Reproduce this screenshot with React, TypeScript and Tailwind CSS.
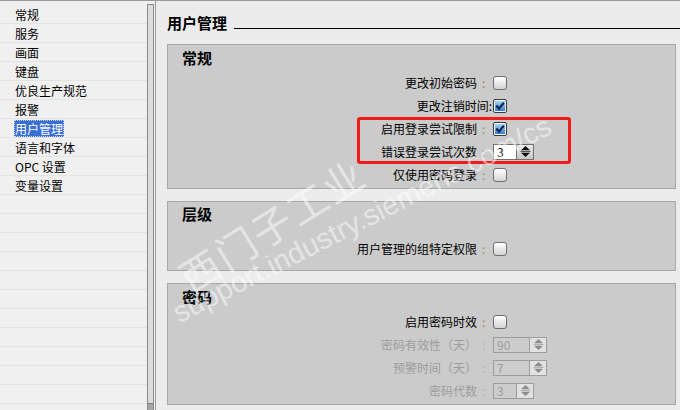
import React from "react";

const FONT = "font-['Noto_Sans_CJK_SC','Microsoft_YaHei',sans-serif]";

function Check({ checked }: { checked?: boolean }) {
  if (checked) {
    return (
      <div className="w-[14px] h-[14px] rounded-[2px] border border-[#3a3a3a] p-[1px] bg-[#f4f8fc]">
        <div className="w-full h-full bg-linear-to-b from-[#a9d4f6] to-[#2f7ccd] flex items-center justify-center">
          <svg width="10" height="10" viewBox="0 0 10 10">
            <path d="M1.3 4.6 L4 7.6 L8.8 1.8" stroke="#0b2350" strokeWidth="2.2" fill="none" />
          </svg>
        </div>
      </div>
    );
  }
  return <div className="w-[14px] h-[14px] rounded-[3px] border border-[#6e6e6e] bg-linear-to-b from-white to-[#d4d4d4]" />;
}

function Arrows({ disabled }: { disabled?: boolean }) {
  const c = disabled ? "#8c8c8c" : "#111";
  return (
    <svg width="11" height="13" viewBox="0 0 11 13">
      <path d="M5.5 1 L10 5.2 L1 5.2 Z" fill={c} />
      <path d="M5.5 12 L10 7.8 L1 7.8 Z" fill={c} />
      <line x1="0.5" y1="6.5" x2="10.5" y2="6.5" stroke={disabled ? "#b0b0b0" : "#555"} strokeWidth="1" />
    </svg>
  );
}

function Spin({ value, wide, disabled }: { value: string; wide?: boolean; disabled?: boolean }) {
  return (
    <div
      className={
        "flex h-[16px] border " +
        (disabled ? "border-[#9c9c9c] " : "border-[#6f6f6f] ") +
        (wide ? "w-[54px]" : "w-[41px]")
      }
    >
      <div
        className={
          "flex-1 flex items-center pl-[3px] text-[12px] leading-[14px] border-r " +
          (disabled ? "bg-[#cdcdcd] text-[#9c9c9c] border-[#9c9c9c]" : "bg-white text-[#111] border-[#6f6f6f]")
        }
      >
        {value}
      </div>
      <div
        className={
          "w-[16px] flex items-center justify-center " +
          (disabled ? "bg-[#e2e2e2]" : "bg-linear-to-b from-[#e8e8e8] to-[#c8c8c8]")
        }
      >
        <Arrows disabled={disabled} />
      </div>
    </div>
  );
}

function Row({
  label,
  control,
  disabled,
  inlineColon,
}: {
  label: string;
  control: React.ReactNode;
  disabled?: boolean;
  inlineColon?: boolean;
}) {
  return (
    <div className="flex items-center h-[23px]">
      {inlineColon ? (
        <div className="w-[325px] text-right text-[12px] leading-[23px] text-black pr-[1px]">{label}:</div>
      ) : (
        <>
          <div
            className={
              "w-[309px] text-right text-[12px] leading-[23px] " + (disabled ? "text-[#9d9d9d]" : "text-black")
            }
          >
            {label}
          </div>
          <div
            className={
              "w-[16px] pl-[5px] text-[12px] leading-[23px] " + (disabled ? "text-[#b0b0b0]" : "text-[#a08a66]")
            }
          >
            :
          </div>
        </>
      )}
      {control}
    </div>
  );
}

const navItems = ["常规", "服务", "画面", "键盘", "优良生产规范", "报警", "用户管理", "语言和字体", "OPC 设置", "变量设置"];

export default function App() {
  const rows = Array.from({ length: 21 }, (_, i) => navItems[i] ?? "");
  return (
    <div className={"relative w-[680px] h-[410px] overflow-hidden flex border-t border-[#9a9a9a] bg-[#f0f0f0] " + FONT}>
      {/* left list */}
      <div className="w-[147px] pt-[4px] flex flex-col bg-[#f0f0f0]">
        {rows.map((t, i) => (
          <div key={i} className="h-[19px] shrink-0 border-b border-[#e3e3e3] flex items-center pl-[14px]">
            {t === "用户管理" ? (
              <span className="border border-dotted border-[#c8d4f0] bg-[#3a6fd4] text-white text-[12px] leading-[15px]">
                {t}
              </span>
            ) : (
              <span className="pl-[1px] text-[12px] leading-[15px] text-black">{t}</span>
            )}
          </div>
        ))}
      </div>
      {/* scrollbar */}
      <div className="w-[8px] pt-[3px] flex flex-col">
        <div className="w-[7px] flex-1 flex flex-col border border-b-0 border-[#8a8a8a] bg-[#dcdcdc]">
          <div className="flex-1" />
          <div className="h-[7px] border-t border-[#7a7a7a] bg-[#a6a6a6]" />
        </div>
      </div>
      {/* right panel */}
      <div className="flex-1 border-l border-[#9a9a9a] bg-[#ececec] pl-[11px] pr-[4px] pt-[12px]">
        <div className="flex h-[20px]">
          <div className="text-[15px] font-bold leading-[20px] text-black">用户管理</div>
          <div className="flex-1 h-[1px] bg-black self-end mb-[4px] ml-[7px] -mr-[4px]" />
        </div>

        {/* 常规 */}
        <div className="relative mt-[11px] h-[145px] border border-[#a8a8a8] bg-[#cbcbcb] pt-[3px]">
          <div className="pl-[14px] text-[15px] font-bold leading-[20px] text-black">常规</div>
          <div className="mt-[3px]">
            <Row label="更改初始密码" control={<Check />} />
            <Row label="更改注销时间" inlineColon control={<Check checked />} />
            <Row label="启用登录尝试限制" control={<Check checked />} />
            <Row label="错误登录尝试次数" control={<Spin value="3" />} />
            <Row label="仅使用密码登录" control={<Check />} />
          </div>
          <div className="absolute left-[189px] top-[72px] w-[214px] h-[47px] border-[3px] border-[#f01c1c] rounded-[3px]" />
        </div>

        {/* 层级 */}
        <div className="mt-[12px] h-[70px] border border-[#a8a8a8] bg-[#cbcbcb] pt-[2px]">
          <div className="pl-[14px] text-[15px] font-bold leading-[20px] text-black">层级</div>
          <div className="mt-[13px]">
            <Row label="用户管理的组特定权限" control={<Check />} />
          </div>
        </div>

        {/* 密码 */}
        <div className="mt-[12px] h-[122px] border border-[#a8a8a8] bg-[#cbcbcb] pt-[3px]">
          <div className="pl-[14px] text-[15px] font-bold leading-[20px] text-black">密码</div>
          <div className="mt-[3px]">
            <Row label="启用密码时效" control={<Check />} />
            <Row label="密码有效性（天）" disabled control={<Spin value="90" wide disabled />} />
            <Row label="预警时间（天）" disabled control={<Spin value="7" wide disabled />} />
            <Row label="密码代数" disabled control={<Spin value="3" disabled />} />
          </div>
        </div>
      </div>

      {/* watermark */}
      <div className="pointer-events-none absolute left-[172px] top-[262px] origin-top-left -rotate-[32deg] text-[40px] leading-[40px] tracking-[2px] text-white/50 whitespace-nowrap">
        西门子工业
      </div>
      <div className="pointer-events-none absolute left-[168px] top-[300px] origin-top-left -rotate-[27deg] text-[29px] leading-[30px] text-white/50 whitespace-nowrap font-['Liberation_Sans',sans-serif]">
        support.industry.siemens.com/cs
      </div>
    </div>
  );
}
